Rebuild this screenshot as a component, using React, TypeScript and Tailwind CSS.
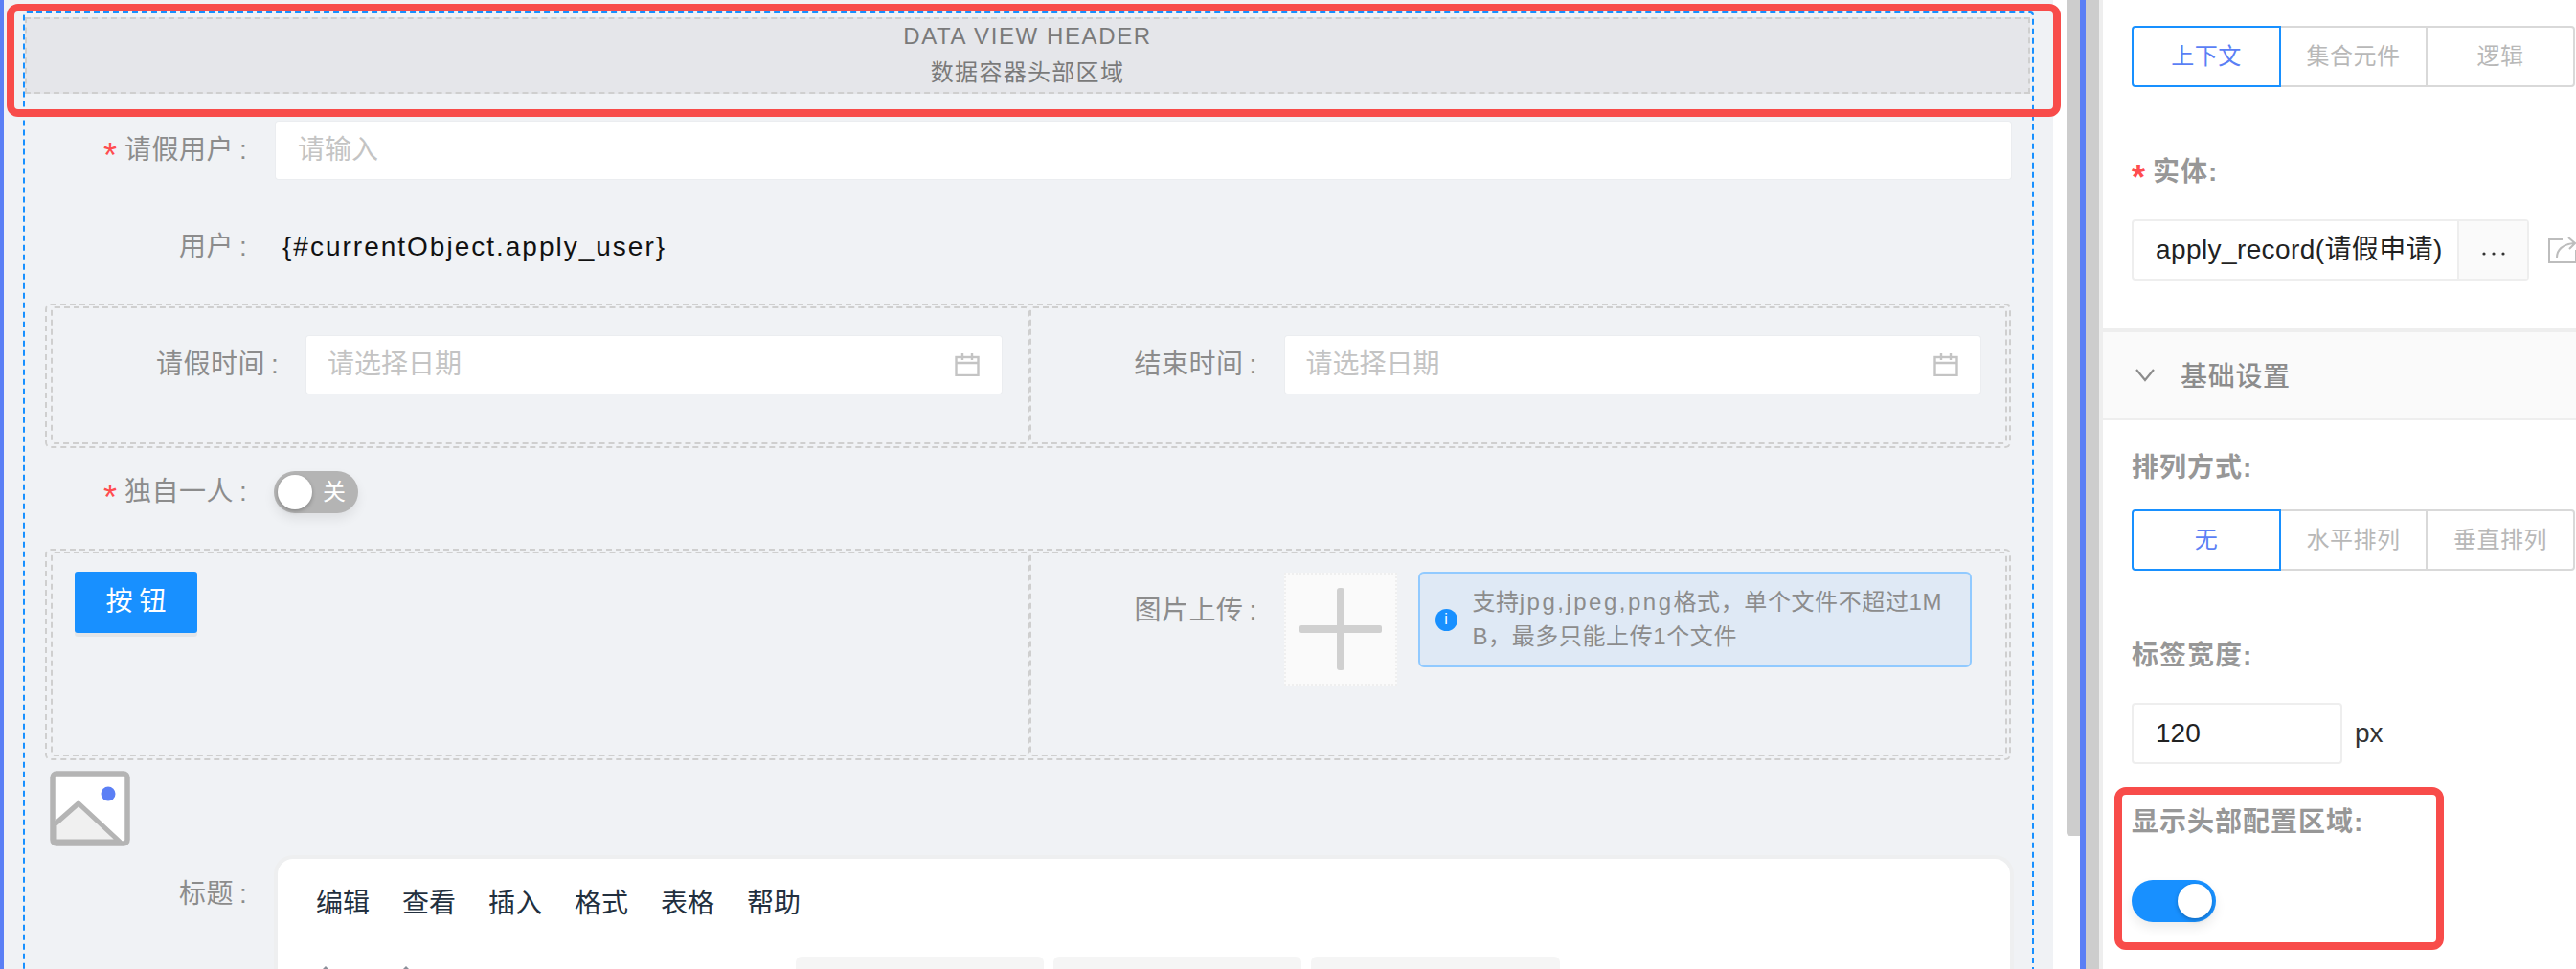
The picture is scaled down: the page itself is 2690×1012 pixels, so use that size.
import React from 'react';

const FormLabel: React.FC<{ text: string; required?: boolean; width: string }> = ({ text, required, width }) => (
    <div className={`${width} h-[40px] shrink-0 flex items-center justify-end text-[28px] leading-[40px] text-[#8c8c8c]`}>
        {required && <span className="text-[#ff4d4f] text-[36px] leading-none mt-[12px] mr-[8px]">*</span>}
        <span className="tracking-[0.5px]">{text}</span>
        <span className="ml-[6px] w-[8px]">:</span>
    </div>
);

const CalendarIcon = () => (
    <svg width="26" height="24" viewBox="0 0 26 24" fill="none" stroke="#c4c4c4" strokeWidth="2.4" className="shrink-0">
        <rect x="1.5" y="4" width="23" height="19" />
        <path d="M1.5 10h23M8 0v7M18 0v7" />
    </svg>
);

const DateField: React.FC<{ label: string; labelWidth: string }> = ({ label, labelWidth }) => (
    <div className="flex items-center">
        <FormLabel text={label} width={labelWidth} />
        <div className="ml-[29px] w-[726px] h-[60px] bg-white rounded-[3px] flex items-center justify-between pl-[22px] pr-[23px] text-[28px] text-[#c4c4c4] shadow-[0_0_0_1px_#ebedf0]">
            <span>请选择日期</span>
            <CalendarIcon />
        </div>
    </div>
);

const Segmented: React.FC<{ items: string[] }> = ({ items }) => (
    <div className="flex h-[64px] w-[463px] text-[24px] tracking-[0.5px]">
        {items.map((item, i) => (
            <div
                key={item}
                className={
                    i === 0
                        ? 'w-[156px] flex items-center justify-center border-2 border-[#1890ff] rounded-l-[4px] text-[#5b7ff5]'
                        : i === 1
                          ? 'w-[153px] flex items-center justify-center border-y-2 border-r-2 border-[#d9d9d9] text-[#b8b8b8]'
                          : 'flex-1 flex items-center justify-center border-y-2 border-r-2 border-[#d9d9d9] rounded-r-[4px] text-[#b8b8b8]'
                }
            >
                {item}
            </div>
        ))}
    </div>
);

const PanelLabel: React.FC<{ text: string; className?: string }> = ({ text, className }) => (
    <div className={`text-[28px] leading-[40px] font-bold text-[#979797] tracking-[1px] ${className ?? ''}`}>{text}</div>
);

const App: React.FC = () => {
    const menus = ['编辑', '查看', '插入', '格式', '表格', '帮助'];

    return (
        <div className="relative flex w-[2690px] h-[1012px] overflow-hidden bg-white font-['Liberation_Sans','Noto_Sans_CJK_SC',sans-serif]">
            {/* canvas */}
            <div className="w-[4px] shrink-0 bg-[#5b7ff5]" />
            <div className="w-[2140px] shrink-0 bg-[#f0f2f5] pl-[20px] pt-[12px]">
                <div className="w-[2100px] h-[1100px] border-2 border-b-0 border-dashed border-[#1890ff] rounded-t-[4px]">
                    <div className="mt-[4px] h-[80px] mr-[2px] border-2 border-dashed border-[#cfcfcf] bg-[#e5e6ea] flex flex-col items-center text-[#7a7a7a] text-[24px]">
                        <div className="h-[38px] leading-[36px] tracking-[1.6px]">DATA VIEW HEADER</div>
                        <div className="h-[36px] leading-[36px] tracking-[1.3px]">数据容器头部区域</div>
                    </div>

                    <div className="mt-[29px] flex items-center">
                        <FormLabel text="请假用户" required width="w-[232px]" />
                        <div className="ml-[30px] w-[1812px] h-[60px] bg-white rounded-[3px] flex items-center pl-[23px] text-[28px] text-[#c4c4c4] shadow-[0_0_0_1px_#ebedf0]">
                            请输入
                        </div>
                    </div>

                    <div className="mt-[41px] h-[60px] flex items-center">
                        <FormLabel text="用户" width="w-[232px]" />
                        <div className="ml-[37px] text-[28px] tracking-[2px] text-[#111]">{'{#currentObject.apply_user}'}</div>
                    </div>

                    {/* date row */}
                    <div className="mt-[29px] ml-[21px] w-[2053px] h-[151px] border-2 border-dashed border-[#cfcfcf] rounded-[6px] pt-px pl-[4px] pr-[2px] flex">
                        <div className="basis-1/2 h-[144px] border-2 border-dashed border-[#cfcfcf] rounded-[4px] pt-[29px]">
                            <DateField label="请假时间" labelWidth="w-[236px]" />
                        </div>
                        <div className="basis-1/2 h-[144px] border-2 border-dashed border-[#cfcfcf] rounded-[4px] pt-[29px]">
                            <DateField label="结束时间" labelWidth="w-[236px]" />
                        </div>
                    </div>

                    <div className="mt-[24px] h-[44px] flex items-center">
                        <FormLabel text="独自一人" required width="w-[232px]" />
                        <div className="ml-[28px] w-[88px] h-[44px] rounded-full bg-[#b4b4b4] flex items-center pl-[4px] shadow-[0_6px_12px_rgba(0,0,0,0.08)]">
                            <div className="w-[36px] h-[36px] rounded-full bg-white shadow-[0_2px_4px_rgba(0,0,0,0.25)]" />
                            <span className="ml-[11px] text-[24px] leading-none text-white">关</span>
                        </div>
                    </div>

                    {/* button + upload row */}
                    <div className="mt-[37px] ml-[21px] w-[2053px] h-[221px] border-2 border-dashed border-[#cfcfcf] rounded-[6px] pt-px pl-[4px] pr-[2px] flex">
                        <div className="basis-1/2 h-[214px] border-2 border-dashed border-[#cfcfcf] rounded-[4px] pl-[23px] pt-[19px]">
                            <button className="w-[128px] h-[64px] rounded-[3px] bg-[#1890ff] text-white text-[28px] tracking-[7px] pl-[7px] shadow-[0_4px_0_rgba(0,0,0,0.05)]">
                                按钮
                            </button>
                        </div>
                        <div className="basis-1/2 h-[214px] border-2 border-dashed border-[#cfcfcf] rounded-[4px] pt-[20px] flex items-start">
                            <div className="mt-[20px]">
                                <FormLabel text="图片上传" width="w-[236px]" />
                            </div>
                            <div className="ml-[28px] w-[118px] h-[118px] shrink-0 border-2 border-dotted border-[#efefef] bg-[#fafafa] flex items-center justify-center">
                                <svg width="86" height="86" viewBox="0 0 86 86" fill="#d0d0d0">
                                    <rect x="0" y="39" width="86" height="8" rx="2" />
                                    <rect x="39" y="0" width="8" height="86" rx="3" />
                                </svg>
                            </div>
                            <div className="ml-[22px] -mt-px w-[578px] h-[100px] shrink-0 rounded-[6px] border-2 border-[#91caff] bg-[#dfe9f5] flex items-center pl-[16px]">
                                <div className="w-[23px] h-[23px] shrink-0 rounded-full bg-[#1890ff] flex items-center justify-center text-white text-[16px] leading-none">
                                    i
                                </div>
                                <div className="ml-[16px] text-[24px] leading-[36px] text-[#8c8c8c] tracking-[0.6px]">
                                    <div>
                                        支持<span className="tracking-[2.5px]">jpg,jpeg,png</span>格式，单个文件不超过1M
                                    </div>
                                    <div>B，最多只能上传1个文件</div>
                                </div>
                            </div>
                        </div>
                    </div>

                    {/* image placeholder */}
                    <svg width="84" height="79" viewBox="0 0 84 79" className="mt-[11px] ml-[26px] block">
                        <rect x="3" y="3" width="78" height="73" rx="4" fill="#fff" stroke="#b4b4b4" strokeWidth="5.5" />
                        <path d="M5 56 L30 34 L73 74 H5 Z" fill="#f0f0f0" stroke="#b4b4b4" strokeWidth="5" strokeLinejoin="round" />
                        <circle cx="61" cy="24" r="7.5" fill="#5b7ff5" />
                    </svg>

                    <div className="mt-[13px] flex items-start">
                        <div className="mt-[17px]">
                            <FormLabel text="标题" width="w-[232px]" />
                        </div>
                        <div className="ml-[32px] w-[1809px] h-[300px] bg-white rounded-[16px] shadow-[0_0_0_4px_#eeeff0] pl-[40px] pt-[27px]">
                            <div className="flex gap-[34px] text-[28px] leading-[40px] text-[#222f3e]">
                                {menus.map(m => (
                                    <span key={m}>{m}</span>
                                ))}
                            </div>
                            <div className="mt-[35px] flex items-start">
                                <svg width="100" height="10" viewBox="0 0 100 10" fill="#8a8f99" className="ml-[4px] mt-[10px] shrink-0">
                                    <path d="M6 0 L11 5 H1 Z" />
                                    <path d="M90 0 L95 5 H85 Z" />
                                </svg>
                                <div className="ml-[397px] flex gap-[10px]">
                                    <div className="w-[259px] h-[60px] rounded-[6px] bg-[#f5f5f5]" />
                                    <div className="w-[259px] h-[60px] rounded-[6px] bg-[#f5f5f5]" />
                                    <div className="w-[260px] h-[60px] rounded-[6px] bg-[#f5f5f5]" />
                                </div>
                            </div>
                        </div>
                    </div>
                </div>
            </div>

            {/* splitter */}
            <div className="w-[14px] shrink-0" />
            <div className="w-[14px] shrink-0 h-[873px] bg-[#cdcdcd] rounded-bl-[4px]" />
            <div className="w-[6px] shrink-0 bg-[#5b7ff5]" />
            <div className="w-[14px] shrink-0 bg-[#cdcdcd]" />
            <div className="w-[4px] shrink-0 bg-[#eeeeee]" />

            {/* settings panel */}
            <div className="flex-1 min-w-0">
                <div className="h-[343px] pl-[30px] pt-[27px]">
                    <Segmented items={['上下文', '集合元件', '逻辑']} />
                    <div className="mt-[69px] h-[40px] flex items-center text-[28px] leading-[40px] font-bold text-[#979797]">
                        <span className="text-[#ff4d4f] text-[36px] leading-none mt-[12px] mr-[8px]">*</span>
                        <span className="tracking-[1px]">实体:</span>
                    </div>
                    <div className="mt-[29px] flex items-center">
                        <div className="w-[415px] h-[64px] flex border-2 border-[#eeeeee] rounded-[4px]">
                            <div className="w-[340px] flex items-center pl-[23px] text-[28px] tracking-[0.4px] text-[#222] whitespace-nowrap border-r-2 border-[#eeeeee]">
                                apply_record(请假申请)
                            </div>
                            <div className="flex-1 bg-[#fafafa] flex items-center justify-center">
                                <svg width="24" height="4" viewBox="0 0 24 4" fill="#333" className="mt-[8px]">
                                    <circle cx="2" cy="2" r="1.6" />
                                    <circle cx="12" cy="2" r="1.6" />
                                    <circle cx="22" cy="2" r="1.6" />
                                </svg>
                            </div>
                        </div>
                        <svg width="30" height="28" viewBox="0 0 30 28" fill="none" stroke="#bdbdbd" strokeWidth="2" className="ml-[19px] shrink-0">
                            <path d="M16 3H2v24h28V14" />
                            <path d="M10 22c0-8 6-14 18-15M22 1l7 6-6 6" />
                        </svg>
                    </div>
                </div>
                <div className="h-[4px] bg-[#eeeeee]" />
                <div className="h-[92px] bg-[#fafafa] border-b-2 border-[#eeeeee] flex items-center pl-[34px] text-[28px] font-medium text-[#8c8c8c]">
                    <svg width="20" height="14" viewBox="0 0 20 14" fill="none" stroke="#8c8c8c" strokeWidth="2.2">
                        <path d="M1 1l9 11 9-11" />
                    </svg>
                    <span className="ml-[27px] mt-[4px] tracking-[0.7px]">基础设置</span>
                </div>
                <div className="pl-[30px]">
                    <PanelLabel text="排列方式:" className="mt-[30px]" />
                    <div className="mt-[23px]">
                        <Segmented items={['无', '水平排列', '垂直排列']} />
                    </div>
                    <PanelLabel text="标签宽度:" className="mt-[69px]" />
                    <div className="mt-[29px] flex items-center">
                        <div className="w-[220px] h-[64px] border-2 border-[#eeeeee] rounded-[4px] flex items-center pl-[23px] text-[28px] text-[#222]">
                            120
                        </div>
                        <span className="ml-[13px] text-[28px] text-[#333]">px</span>
                    </div>
                    <PanelLabel text="显示头部配置区域:" className="mt-[41px]" />
                    <div className="mt-[40px] w-[88px] h-[44px] rounded-full bg-[#1890ff] flex items-center justify-end pr-[4px] shadow-[0_6px_12px_rgba(0,0,0,0.08)]">
                        <div className="w-[36px] h-[36px] rounded-full bg-white shadow-[0_2px_4px_rgba(0,0,0,0.25)]" />
                    </div>
                </div>
            </div>

            {/* annotation boxes */}
            <div className="absolute left-[7px] top-[4px] w-[2145px] h-[118px] border-[8px] border-[#f84c4a] rounded-[12px]" />
            <div className="absolute left-[2208px] top-[822px] w-[344px] h-[170px] border-[8px] border-[#f84c4a] rounded-[12px]" />
        </div>
    );
};

export default App;
